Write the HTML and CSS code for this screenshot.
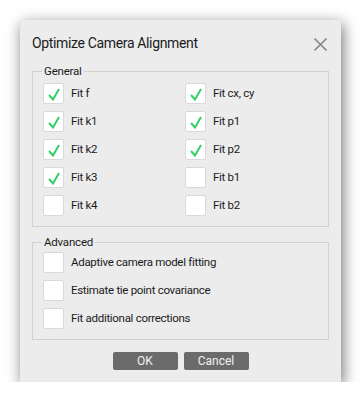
FILE: index.html
```html
<!DOCTYPE html>
<html lang="en">
<head>
  <meta charset="UTF-8">
  <meta name="viewport" content="width=device-width, initial-scale=1">
  <title>Optimize Camera Alignment</title>
  <link rel="stylesheet" href="styles.css">
</head>
<body>

  <!-- Dialog -->
  <div class="dialog">

    <!-- Title bar -->
    <div class="dialog-header">
      <span class="dialog-title">Optimize Camera Alignment</span>
      <svg class="close-icon" width="13" height="13" viewBox="0 0 13 13">
        <path d="M0.5 0.5 L12.5 12.5 M12.5 0.5 L0.5 12.5" stroke="#8c8c8c" stroke-width="1.6" fill="none"/>
      </svg>
    </div>

    <!-- General group -->
    <fieldset class="group group-general">
      <legend>General</legend>
      <div class="check-grid">
        <label class="check-item"><span class="box checked"></span>Fit f</label>
        <label class="check-item"><span class="box checked"></span>Fit cx, cy</label>
        <label class="check-item"><span class="box checked"></span>Fit k1</label>
        <label class="check-item"><span class="box checked"></span>Fit p1</label>
        <label class="check-item"><span class="box checked"></span>Fit k2</label>
        <label class="check-item"><span class="box checked"></span>Fit p2</label>
        <label class="check-item"><span class="box checked"></span>Fit k3</label>
        <label class="check-item"><span class="box"></span>Fit b1</label>
        <label class="check-item"><span class="box"></span>Fit k4</label>
        <label class="check-item"><span class="box"></span>Fit b2</label>
      </div>
    </fieldset>

    <!-- Advanced group -->
    <fieldset class="group group-advanced">
      <legend>Advanced</legend>
      <div class="check-list">
        <label class="check-item"><span class="box"></span>Adaptive camera model fitting</label>
        <label class="check-item"><span class="box"></span>Estimate tie point covariance</label>
        <label class="check-item"><span class="box"></span>Fit additional corrections</label>
      </div>
    </fieldset>

    <!-- Buttons -->
    <div class="dialog-buttons">
      <button class="btn">OK</button>
      <button class="btn">Cancel</button>
    </div>

  </div>

</body>
</html>
```

FILE: styles.css
```css
body {
  margin: 0;
  padding: 0;
  background: #fff;
  font-family: Roboto, 'Liberation Sans', sans-serif;
  color: #1b1b1b;
}

/* Dialog window */
.dialog {
  margin: 20px 0 0 20px;
  width: 321px;
  height: 362px;
  box-sizing: border-box;
  background: #ececec;
  box-shadow: 2px 4px 14px rgba(0, 0, 0, 0.55);
  display: flex;
  flex-direction: column;
}

.dialog-header {
  display: flex;
  align-items: center;
  justify-content: space-between;
  padding: 13px 14px 0 12px;
  height: 20px;
}

.dialog-title {
  font-size: 14px;
  line-height: 20px;
  letter-spacing: -0.35px;
}

.close-icon {
  display: block;
  margin-top: 2px;
}

/* Group boxes */
.group {
  margin: 0 12px;
  padding: 0 10px 10px 10px;
  border: 1px solid #d2d2d2;
  min-width: 0;
}

.group legend {
  font-size: 11.5px;
  line-height: 14px;
  padding: 0 2px;
  margin-left: -1px;
  letter-spacing: -0.2px;
}

.group-general {
  margin-top: 11px;
  padding-top: 5px;
}

.group-advanced {
  margin-top: 8px;
  padding-top: 3px;
}

.check-grid {
  display: grid;
  grid-template-columns: 142px 1fr;
  row-gap: 7px;
}

.check-list {
  display: flex;
  flex-direction: column;
  gap: 7px;
}

.check-item {
  display: flex;
  align-items: center;
  gap: 7px;
  font-size: 11.5px;
  line-height: 21px;
  letter-spacing: -0.3px;
}

.box {
  width: 19px;
  height: 19px;
  background: #fff;
  border: 1px solid #d9d9d9;
  border-radius: 2px;
  flex-shrink: 0;
}

.box.checked {
  background: #fff url("data:image/svg+xml;utf8,<svg xmlns='http://www.w3.org/2000/svg' width='19' height='19' viewBox='0 0 19 19'><path d='M5 11 L9 15.5 L15 5' stroke='%2333d066' stroke-width='2' fill='none'/></svg>") no-repeat center;
}

/* Buttons */
.dialog-buttons {
  display: flex;
  justify-content: center;
  gap: 6px;
  margin-top: 12px;
}

.btn {
  width: 65px;
  height: 18px;
  padding: 0;
  border: none;
  border-radius: 2px;
  background: #6b6b6b;
  color: #f2f2f2;
  font-family: Roboto, 'Liberation Sans', sans-serif;
  font-size: 12px;
  line-height: 18px;
}
```
